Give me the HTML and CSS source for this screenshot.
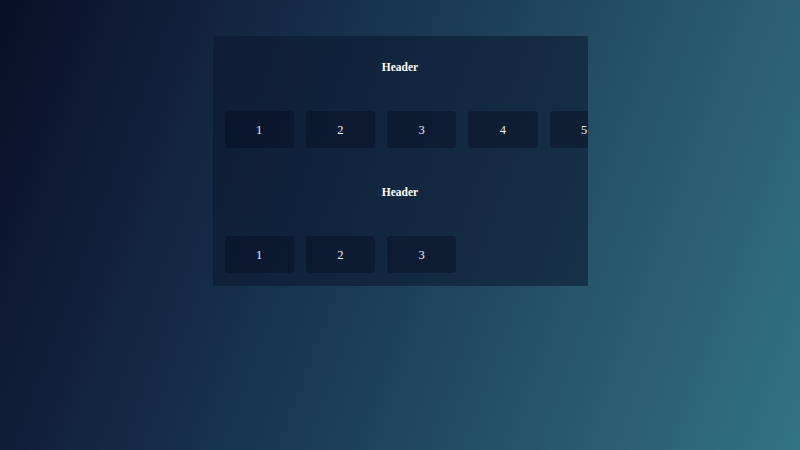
FILE: index.html
```html
<!DOCTYPE html>
<html>
<head>
<meta charset="utf-8">
<link rel="stylesheet" href="styles.css">
</head>
<body>
<div class="page">
  <div class="panel">
    <section class="section">
      <div class="header">Header</div>
      <div class="row">
        <div class="card">1</div>
        <div class="card">2</div>
        <div class="card">3</div>
        <div class="card">4</div>
        <div class="card">5</div>
      </div>
    </section>
    <section class="section">
      <div class="header">Header</div>
      <div class="row">
        <div class="card">1</div>
        <div class="card">2</div>
        <div class="card">3</div>
      </div>
    </section>
  </div>
</div>
</body>
</html>
```
FILE: styles.css
```css
html, body {
  margin: 0;
  padding: 0;
  width: 800px;
  height: 450px;
  overflow: hidden;
}
body {
  background: linear-gradient(110deg, #0a0e28 0%, #1a3852 45%, #337482 100%);
  font-family: "Liberation Serif", "Times New Roman", serif;
  color: #ffffff;
}
.page {
  display: flex;
  justify-content: center;
  padding-top: 36px;
}
.panel {
  width: 375px;
  height: 250px;
  background: rgba(12, 24, 48, 0.58);
  overflow: hidden;
  display: flex;
  flex-direction: column;
}
.section {
  height: 125px;
  display: flex;
  flex-direction: column;
}
.header {
  height: 62px;
  display: flex;
  align-items: center;
  justify-content: center;
  font-weight: bold;
  font-size: 11.5px;
}
.row {
  display: flex;
  gap: 12px;
  padding: 13px 12px 0 12px;
}
.card {
  flex: 0 0 69.25px;
  height: 37px;
  border-radius: 4px;
  background: rgba(6, 14, 36, 0.45);
  display: flex;
  align-items: center;
  justify-content: center;
  font-size: 12.5px;
  padding-top: 1px;
  box-sizing: border-box;
  color: #eef1f5;
}
```
